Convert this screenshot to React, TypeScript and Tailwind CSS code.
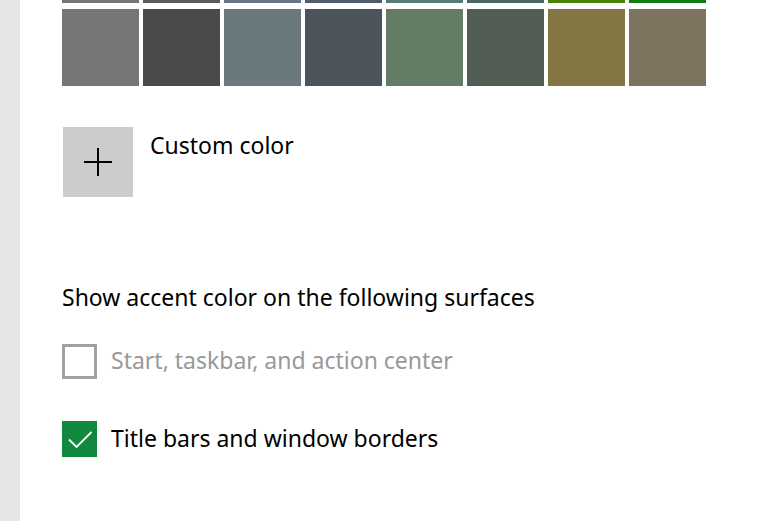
const topRow = ['#7a7574', '#5d5a58', '#68768a', '#515c6b', '#567c73', '#486860', '#498205', '#107c10']
const bottomRow = ['#767676', '#4c4a48', '#69797e', '#4a5459', '#647c64', '#525e54', '#847545', '#7e735f']

function Checkbox({ checked, disabled, label }: { checked?: boolean; disabled?: boolean; label: string }) {
  return (
    <div className="flex items-center gap-[14px]">
      {checked ? (
        <span className="flex h-[36px] w-[35px] items-center justify-center bg-[#10893e]">
          <svg width="26" height="20" viewBox="0 0 26 20" fill="none">
            <path d="M2 10.5 L9.5 18 L24.5 3" stroke="white" strokeWidth="1.8" />
          </svg>
        </span>
      ) : (
        <span className="h-[35px] w-[35px] border-[3px] border-[#a0a0a0] bg-white" />
      )}
      <span className={disabled ? 'pb-[3px] text-[#999999]' : 'pb-[3px] text-black'}>{label}</span>
    </div>
  )
}

export default function App() {
  return (
    <div className="flex h-[521px] w-[777px] overflow-hidden bg-white font-['Noto_Sans','Open_Sans',sans-serif] text-[23px] leading-[30px] text-black">
      <div className="w-[20px] shrink-0 bg-[#e6e6e6]" />
      <main className="flex flex-col pl-[42px]">
        <div className="-mt-[74px] grid grid-cols-[repeat(8,77px)] gap-x-[4px] gap-y-[6px]">
          {[...topRow, ...bottomRow].map((c, i) => (
            <div key={i} className="h-[77px] w-[77px]" style={{ backgroundColor: c }} />
          ))}
        </div>

        <div className="mt-[41px] ml-px flex items-start gap-[17px]">
          <button className="flex h-[70px] w-[70px] items-center justify-center bg-[#cccccc]">
            <svg width="28" height="28" viewBox="0 0 28 28">
              <path d="M0 14 H28 M14 0 V28" stroke="black" strokeWidth="2" />
            </svg>
          </button>
          <span className="mt-[3px]">Custom color</span>
        </div>

        <h2 className="mt-[85px] font-normal">Show accent color on the following surfaces</h2>

        <div className="mt-[32px] flex flex-col gap-[42px]">
          <Checkbox disabled label="Start, taskbar, and action center" />
          <Checkbox checked label="Title bars and window borders" />
        </div>
      </main>
    </div>
  )
}
